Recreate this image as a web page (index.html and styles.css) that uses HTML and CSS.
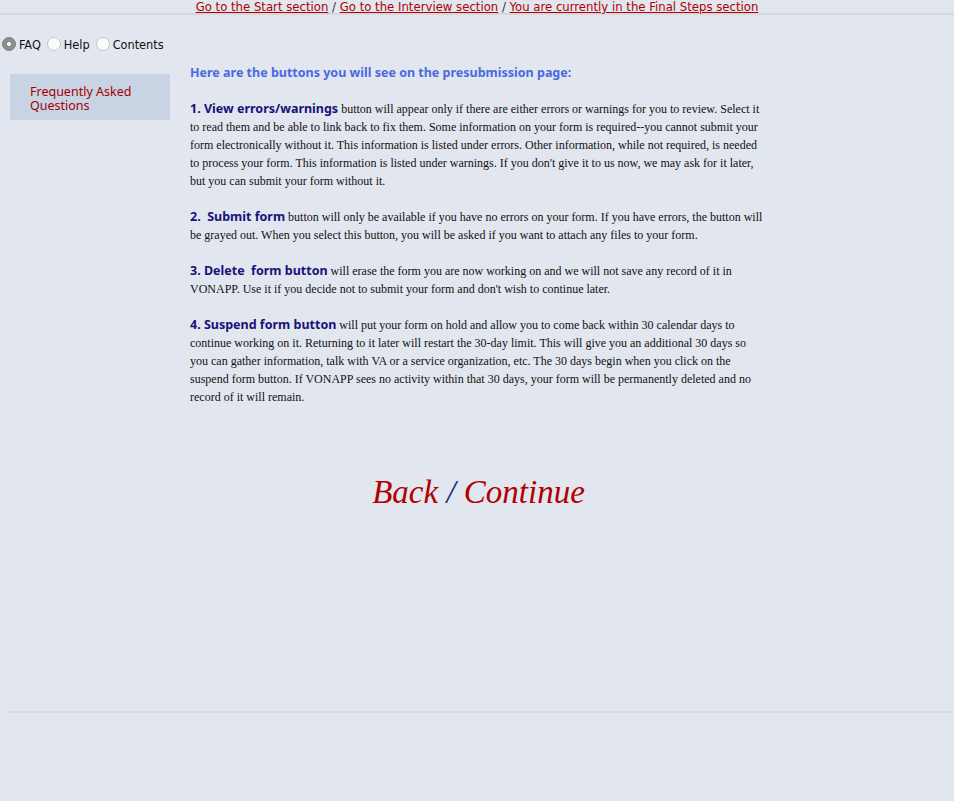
FILE: index.html
```html
<!DOCTYPE html>
<html>
<head>
<meta charset="utf-8">
<title>Final Steps - FAQ</title>
<link rel="stylesheet" href="styles.css">
</head>
<body>
<div class="topnav">
  <a href="#">Go to the Start section</a> / <a href="#">Go to the Interview section</a> / <a href="#">You are currently in the Final Steps section</a>
</div>
<div class="tabs">
  <label class="tab"><input type="radio" name="tab" checked><span>FAQ</span></label>
  <label class="tab"><input type="radio" name="tab"><span>Help</span></label>
  <label class="tab"><input type="radio" name="tab"><span>Contents</span></label>
</div>
<div class="main">
  <div class="sidebar">
    <a href="#" class="side-link">Frequently Asked Questions</a>
  </div>
  <div class="content">
    <h2 class="heading">Here are the buttons you will see on the presubmission page:</h2>
    <p class="item"><b class="lead">1. View errors/warnings</b> button will appear only if there are either errors or warnings for you to review. Select it to read them and be able to link back to fix them. Some information on your form is required--you cannot submit your form electronically without it. This information is listed under errors. Other information, while not required, is needed to process your form. This information is listed under warnings. If you don't give it to us now, we may ask for it later, but you can submit your form without it.</p>
    <p class="item"><b class="lead">2.&nbsp; Submit form</b> button will only be available if you have no errors on your form. If you have errors, the button will be grayed out. When you select this button, you will be asked if you want to attach any files to your form.</p>
    <p class="item"><b class="lead">3. Delete&nbsp; form button</b> will erase the form you are now working on and we will not save any record of it in VONAPP. Use it if you decide not to submit your form and don't wish to continue later.</p>
    <p class="item"><b class="lead">4. Suspend form button</b> will put your form on hold and allow you to come back within 30 calendar days to continue working on it. Returning to it later will restart the 30-day limit. This will give you an additional 30 days so you can gather information, talk with VA or a service organization, etc. The 30 days begin when you click on the suspend form button. If VONAPP sees no activity within that 30 days, your form will be permanently deleted and no record of it will remain.</p>
    <div class="nav-buttons"><a href="#">Back</a> <span class="sep">/</span> <a href="#">Continue</a></div>
  </div>
</div>
<div class="footer-line"></div>
</body>
</html>
```
FILE: styles.css
```css
html, body {
  margin: 0;
  padding: 0;
  background: #e2e6ee;
}
body {
  width: 954px;
  height: 801px;
  overflow: hidden;
}
.topnav {
  text-align: center;
  font-family: "DejaVu Sans Condensed", "DejaVu Sans", sans-serif;
  font-stretch: condensed;
  font-size: 13px;
  line-height: 13px;
  height: 13px;
  color: #333;
  border-bottom: 2px solid #d5d9df;
}
.topnav a {
  color: #b00000;
  text-decoration: underline;
}
.tabs {
  display: flex;
  align-items: center;
  padding: 21px 0 0 2px;
  height: 16px;
  font-family: "DejaVu Sans Condensed", "DejaVu Sans", sans-serif;
  font-stretch: condensed;
  font-size: 12.6px;
  color: #111;
}
.tab {
  display: flex;
  align-items: center;
  margin-right: 6px;
}
.tab input {
  appearance: none;
  -webkit-appearance: none;
  margin: 0 3px 0 0;
  width: 14px;
  height: 14px;
  border-radius: 50%;
  border: 1px solid #c4c6ca;
  background: #fbfbfb;
  box-sizing: border-box;
}
.tab input:checked {
  background: #8d8d8f radial-gradient(circle, #f4f4f4 0 1.6px, transparent 2.2px);
  border-color: #7d7d80;
}
.main {
  display: flex;
  align-items: flex-start;
  padding-top: 22px;
  height: 637px;
}
.sidebar {
  margin-left: 10px;
  width: 160px;
  height: 46px;
  box-sizing: border-box;
  background: #c8d3e4;
  padding: 10px 0 0 20px;
  line-height: 13px;
}
.side-link {
  font-family: "Noto Sans", "DejaVu Sans", sans-serif;
  font-size: 12.5px;
  color: #a40000;
  text-decoration: none;
}
.content {
  margin-left: 20px;
  width: 577px;
}
.heading {
  margin: -10px 0 0 0;
  font-family: "Noto Sans", "DejaVu Sans", sans-serif;
  font-weight: bold;
  font-size: 12.5px;
  line-height: 18px;
  color: #4a69e2;
  padding-bottom: 18px;
}
.item {
  margin: 0 0 18px 0;
  font-family: "Liberation Serif", serif;
  font-size: 12px;
  line-height: 18px;
  color: #111;
}
.lead {
  font-family: "Noto Sans", "DejaVu Sans", sans-serif;
  font-size: 12.5px;
  line-height: 12px;
  color: #16127a;
}
.nav-buttons {
  text-align: center;
  margin-top: 66px;
  font-family: "Liberation Serif", serif;
  font-style: italic;
  font-size: 33px;
  line-height: 40px;
}
.nav-buttons a {
  color: #b00000;
  text-decoration: none;
}
.nav-buttons .sep {
  color: #10327a;
}
.footer-line {
  margin: 0 0 0 8px;
  height: 2px;
  background: #d8dce2;
}
```
